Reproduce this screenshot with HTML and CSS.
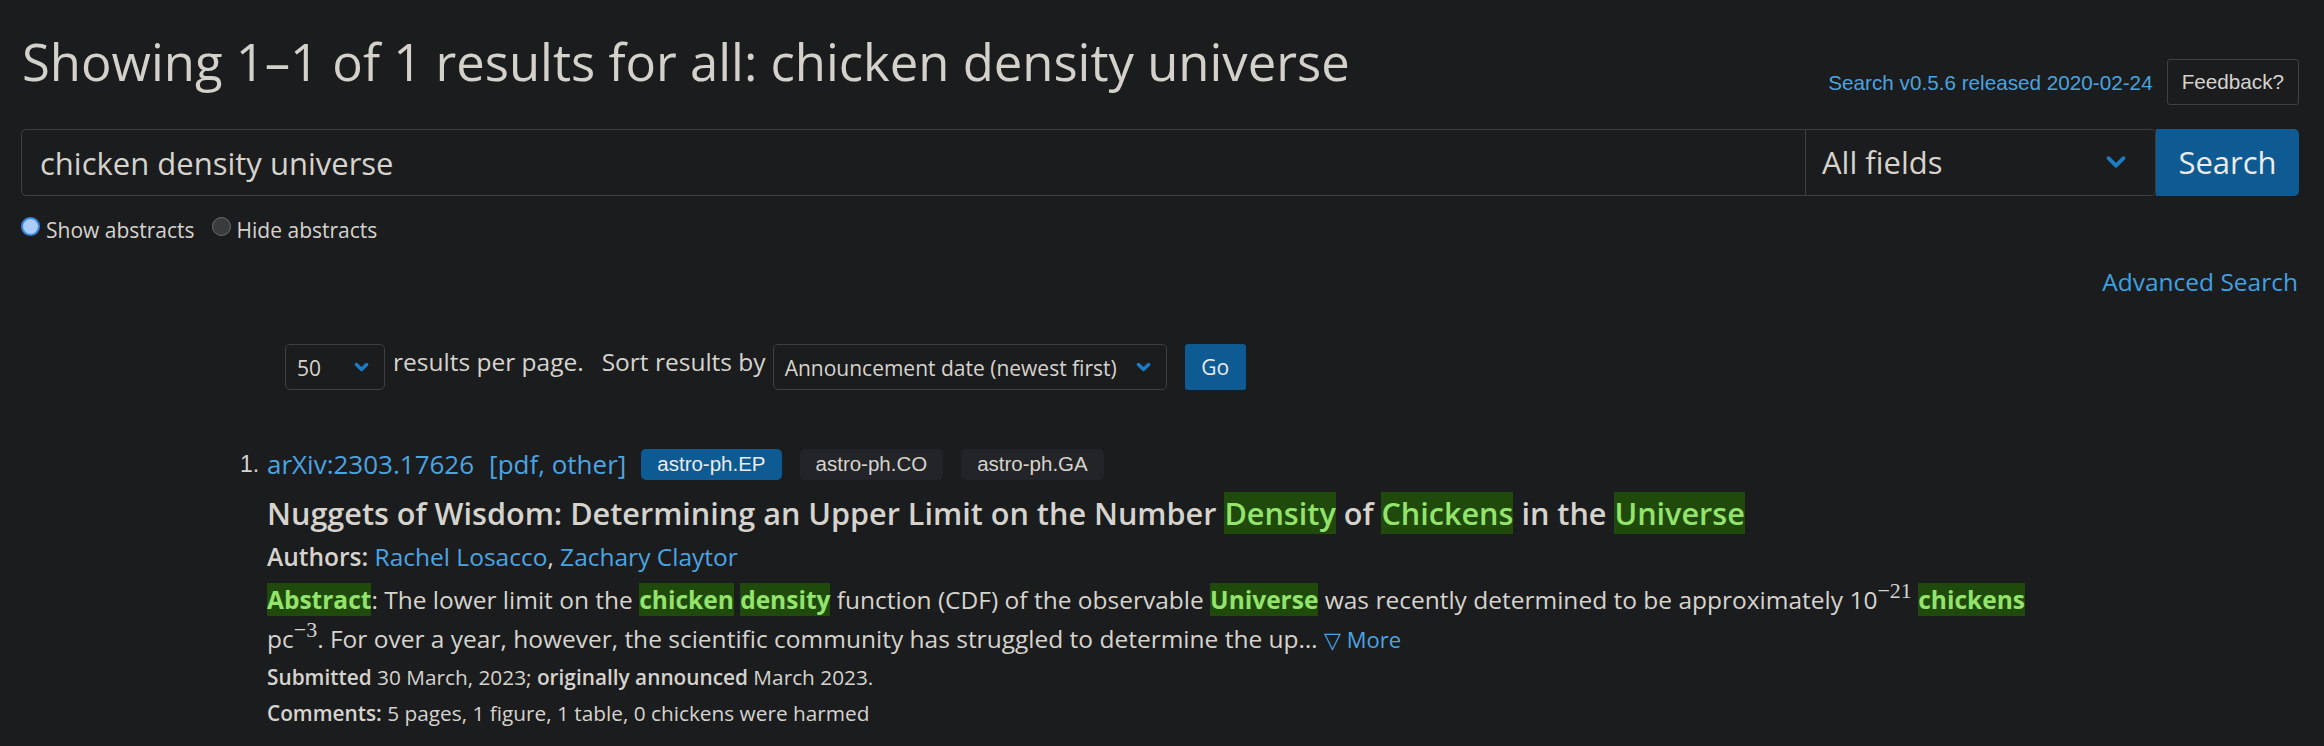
FILE: index.html
```html
<!DOCTYPE html>
<html lang="en">
<head>
<meta charset="utf-8">
<title>Search | arXiv</title>
<link rel="stylesheet" href="styles.css">
</head>
<body>
<main class="page">
  <div class="top">
    <h1 class="heading">Showing 1–1 of 1 results for all: chicken density universe</h1>
    <div class="meta">
      <a class="version" href="#">Search v0.5.6 released 2020-02-24</a>
      <span class="feedback">Feedback?</span>
    </div>
  </div>

  <div class="searchbar">
    <div class="query">chicken density universe</div>
    <div class="field-select">
      <span>All fields</span>
      <svg class="chev chev-lg" viewBox="0 0 20 14"><path d="M3 3 L10 10 L17 3" fill="none" stroke="currentColor" stroke-width="3.6" stroke-linecap="round" stroke-linejoin="round"/></svg>
    </div>
    <span class="btn-search">Search</span>
  </div>

  <div class="radios">
    <label class="radio"><span class="dot dot-on"></span>Show abstracts</label>
    <label class="radio"><span class="dot dot-off"></span>Hide abstracts</label>
  </div>

  <div class="adv"><a href="#">Advanced Search</a></div>

  <div class="controls">
    <div class="sel sel-size"><span>50</span><svg class="chev" viewBox="0 0 20 14"><path d="M4 4 L10 10 L16 4" fill="none" stroke="currentColor" stroke-width="4" stroke-linecap="round" stroke-linejoin="round"/></svg></div>
    <span class="ctl-text">results per page.</span>
    <span class="ctl-text ctl-sort">Sort results by</span>
    <div class="sel sel-order"><span>Announcement date (newest first)</span><svg class="chev" viewBox="0 0 20 14"><path d="M4 4 L10 10 L16 4" fill="none" stroke="currentColor" stroke-width="4" stroke-linecap="round" stroke-linejoin="round"/></svg></div>
    <span class="btn-go">Go</span>
  </div>

  <ol class="results">
    <li class="result">
      <div class="result-head">
        <span class="num">1.</span>
        <a class="link" href="#">arXiv:2303.17626</a>
        <span class="formats">[<a class="link" href="#">pdf</a>, <a class="link" href="#">other</a>]</span>
        <span class="tags">
          <span class="tag tag-primary">astro-ph.EP</span>
          <span class="tag">astro-ph.CO</span>
          <span class="tag">astro-ph.GA</span>
        </span>
      </div>
      <p class="title">Nuggets of Wisdom: Determining an Upper Limit on the Number <span class="hl">Density</span> of <span class="hl">Chickens</span> in the <span class="hl">Universe</span></p>
      <p class="authors"><span class="label">Authors:</span> <a class="link" href="#">Rachel Losacco</a>, <a class="link" href="#">Zachary Claytor</a></p>
      <p class="abstract"><span class="hl hl-b">Abstract</span>: The lower limit on the <span class="hl hl-b">chicken</span> <span class="hl hl-b">density</span> function (CDF) of the observable <span class="hl hl-b">Universe</span> was recently determined to be approximately 10<sup class="math">−21</sup> <span class="hl hl-b">chickens</span> pc<sup class="math">−3</sup>. For over a year, however, the scientific community has struggled to determine the up… <a class="link more" href="#">▽ More</a></p>
      <p class="small"><span class="label">Submitted</span> 30 March, 2023; <span class="label">originally announced</span> March 2023.</p>
      <p class="small"><span class="label">Comments:</span> 5 pages, 1 figure, 1 table, 0 chickens were harmed</p>
    </li>
  </ol>
</main>
</body>
</html>
```
FILE: styles.css
```css
html, body {
  margin: 0;
  padding: 0;
  background: #1b1c1e;
}
body {
  font-family: "Open Sans", "Noto Sans", sans-serif;
  color: #d6d3cd;
}
a { text-decoration: none; }

.page {
  padding: 35px 25px 0 21px;
}

.top {
  display: flex;
  justify-content: space-between;
  align-items: flex-start;
}
.heading {
  margin: 0 0 0 1px;
  font-size: 50.8px;
  line-height: 54px;
  font-weight: 500;
  color: #d4d1cb;
}
.meta {
  margin-top: 24px;
  display: flex;
  align-items: center;
  gap: 14px;
}
.version {
  font-family: "Liberation Sans", Arial, sans-serif;
  font-size: 20.7px;
  color: #4aa3df;
  padding-top: 2px;
}
.feedback {
  font-family: "Liberation Sans", Arial, sans-serif;
  font-size: 20.7px;
  color: #d6d3cd;
  border: 1px solid #3f4144;
  border-radius: 3px;
  height: 44px;
  padding: 0 14px;
  display: flex;
  align-items: center;
}

.searchbar {
  margin-top: 24px;
  display: flex;
  height: 67px;
}
.query {
  flex: 1;
  border: 1px solid #3d3f42;
  border-radius: 5px 0 0 5px;
  padding: 0 18px;
  display: flex;
  align-items: center;
  font-size: 31px;
  color: #d6d3cd;
}
.field-select {
  width: 351px;
  box-sizing: border-box;
  border: 1px solid #3d3f42;
  border-left: none;
  border-radius: 0 5px 5px 0;
  margin-left: -1px;
  padding: 0 28px 0 17px;
  display: flex;
  align-items: center;
  justify-content: space-between;
  font-size: 31px;
}
.field-select > span { padding-bottom: 2px; }
.chev {
  width: 17px;
  height: 12px;
  color: #1b7cc4;
}
.chev-lg {
  width: 22px;
  height: 15px;
}
.btn-search {
  width: 143px;
  background: #0e5a92;
  color: #ecebea;
  border-radius: 0 5px 5px 0;
  display: flex;
  align-items: center;
  justify-content: center;
  font-size: 31px;
  padding-bottom: 2px;
  box-sizing: border-box;
}

.radios {
  margin-top: 19px;
  display: flex;
  gap: 17px;
  font-size: 21px;
  line-height: 30px;
}
.radio {
  display: flex;
  align-items: center;
  gap: 6px;
  color: #d6d3cd;
}
.dot {
  width: 19px;
  height: 19px;
  border-radius: 50%;
  box-sizing: border-box;
  margin-top: -8px;
}
.dot-on {
  background: #a9cdfd;
  border: 2px solid #3a86e6;
}
.dot-off {
  background: #3a3b3d;
  border: 1px solid #6b6c6e;
}

.adv {
  margin-top: 20px;
  text-align: right;
  font-size: 24.5px;
  line-height: 33px;
  margin-right: 1px;
}
.adv a { color: #3fa1e0; }

.controls {
  margin-top: 46px;
  margin-left: 264px;
  display: flex;
  align-items: center;
  height: 46px;
}
.sel {
  height: 46px;
  box-sizing: border-box;
  border: 1px solid #3d3f42;
  border-radius: 5px;
  display: flex;
  align-items: center;
  justify-content: space-between;
  padding: 0 14px 0 11px;
  font-size: 21px;
  color: #d6d3cd;
}
.sel > span { padding-top: 2px; }
.sel-size { width: 100px; }
.sel-order { width: 394px; margin-left: 7px; }
.ctl-text {
  font-size: 24.5px;
  margin-left: 8px;
  margin-top: -12px;
}
.ctl-sort { margin-left: 18px; }
.btn-go {
  margin-left: 18px;
  width: 61px;
  height: 46px;
  background: #0e5a92;
  color: #ecebea;
  border-radius: 3px;
  display: flex;
  align-items: center;
  justify-content: center;
  font-size: 21px;
}

.results {
  list-style: none;
  margin: 56px 0 0 219px;
  padding: 0;
}
.result-head {
  display: flex;
  align-items: center;
  height: 36px;
  font-size: 26px;
}
.num {
  font-family: "Liberation Sans", Arial, sans-serif;
  font-size: 23px;
  color: #d6d3cd;
  width: 27px;
}
.link { color: #4ba4e2; }
.formats {
  margin-left: 15px;
  color: #4ba4e2;
}
.tags {
  display: flex;
  gap: 18px;
  margin-left: 15px;
}
.tag {
  font-family: "Liberation Sans", Arial, sans-serif;
  font-size: 20.5px;
  height: 31px;
  padding: 0 16px;
  display: flex;
  align-items: center;
  border-radius: 5px;
  background: #232427;
  color: #d6d3cd;
}
.tag-primary {
  background: #0e5a92;
  color: #ecebea;
}

.result p { margin: 0; padding-left: 27px; }
.title {
  margin-top: 10px !important;
  font-size: 30.6px;
  line-height: 42px;
  font-weight: 600;
  color: #d6d3cd;
}
.hl {
  background: #1f4a0b;
  color: #93e36c;
}
.hl-b { font-weight: 700; }
.authors {
  margin-top: 4px !important;
  font-size: 24.5px;
  line-height: 38px;
}
.label { font-weight: 600; }
.abstract {
  margin-top: 4px !important;
  font-size: 24.5px;
  line-height: 39px;
  max-width: 1790px;
}
.math {
  font-family: "Liberation Serif", "DejaVu Serif", serif;
  font-size: 22px;
  line-height: 0;
  vertical-align: 11px;
}
.more { font-size: 22px; }
.small {
  font-size: 20.8px;
  line-height: 36px;
}
```
